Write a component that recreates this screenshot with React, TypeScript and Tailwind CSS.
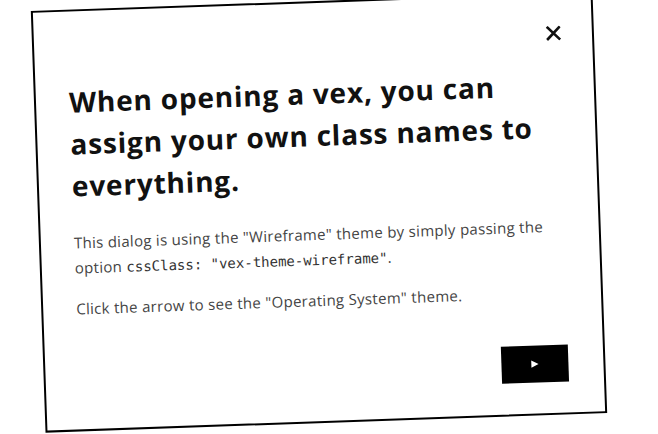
import React from "react"

export default function App() {
  return (
    <div className="w-[658px] h-[434px] bg-white overflow-hidden">
      <div className="relative ml-[37.5px] mt-[0.5px] w-[562px] h-[422px] box-border border-2 border-black bg-white rotate-[-2deg] pl-[33px] pr-[35px] pt-[69px] flex flex-col font-['Open_Sans',sans-serif]">
        <button className="absolute right-[31px] top-[30px] w-4 h-4 flex items-center justify-center">
          <svg viewBox="0 0 16 16" className="w-[15px] h-[15px]">
            <path d="M2 2 L14 14 M14 2 L2 14" stroke="#111" strokeWidth="2.8" strokeLinecap="square" />
          </svg>
        </button>
        <h1 className="text-[28px] leading-[42px] font-bold text-[#111] tracking-[0.8px] pr-[20px]">
          When opening a vex, you can assign your own class names to everything.
        </h1>
        <p className="mt-[23.5px] text-[15px] leading-[25px] text-[#444] tracking-[0.3px]">
          This dialog is using the "Wireframe" theme by simply passing the option{" "}
          <code className="font-['DejaVu_Sans_Mono',monospace] text-[14px] text-[#333] tracking-normal">cssClass: "vex-theme-wireframe"</code>.
        </p>
        <p className="mt-[15px] text-[15px] leading-[25px] text-[#444] tracking-[0.3px]">
          Click the arrow to see the "Operating System" theme.
        </p>
        <div className="mt-[40px] flex justify-end">
          <button className="w-[67px] h-[37px] bg-black flex items-center justify-center">
            <svg viewBox="0 0 10 10" className="w-[9px] h-[9px]">
              <path d="M1 1 L9 5 L1 9 Z" fill="white" />
            </svg>
          </button>
        </div>
      </div>
    </div>
  )
}
